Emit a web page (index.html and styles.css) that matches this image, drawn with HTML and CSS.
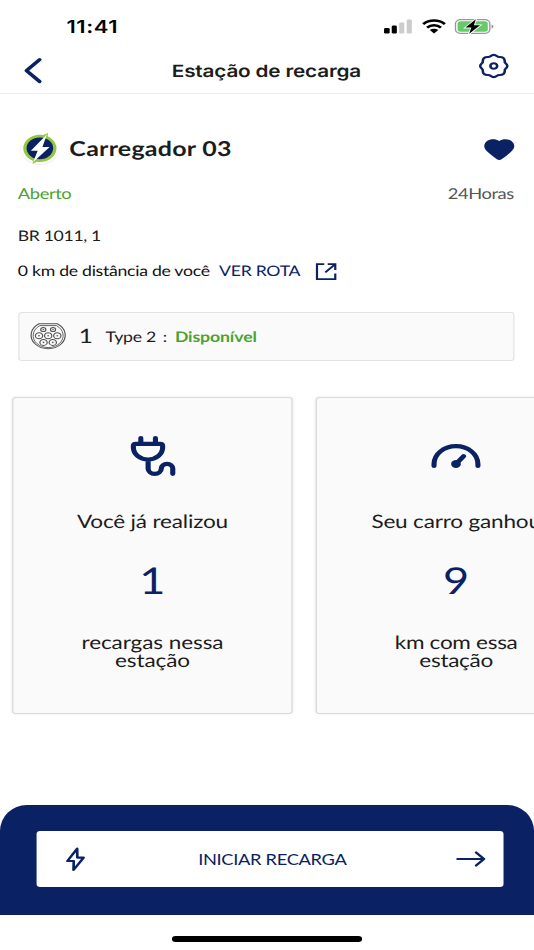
FILE: index.html
```html
<!DOCTYPE html>
<html lang="pt-BR">
<head>
<meta charset="utf-8">
<title>Estação de recarga</title>
<link rel="stylesheet" href="styles.css">
</head>
<body>
<div class="screen">
  <div class="status">
    <span class="time">11:41</span>
    <div class="indicators">
      <svg class="signal" width="23" height="15" viewBox="0 0 23 15"><rect x="0" y="9" width="4.6" height="5.5" rx="1.2"/><rect x="6.3" y="6.5" width="4.2" height="8" rx="1.2"/><g fill="#ccc"><rect x="12.4" y="3.5" width="4.2" height="11" rx="1.2"/><rect x="18.6" y="0.5" width="4.2" height="14" rx="1.2"/></g></svg>
      <svg class="wifi" width="20" height="15" viewBox="0 0 20 15"><g fill="none" stroke="#000" stroke-width="2.4"><path d="M1.1 5.2a12.6 12.6 0 0 1 17.8 0"/><path d="M4.3 8.6a8.1 8.1 0 0 1 11.4 0"/></g><path d="M6.5 11.1a5 5 0 0 1 7 0L10 14.6Z"/></svg>
      <svg class="battery" width="32" height="17" viewBox="0 0 32 17"><rect x=".6" y="1.6" width="28.2" height="13.8" rx="4" fill="#fff" stroke="#999" stroke-width="1.1"/><rect x="2.3" y="3.3" width="24.8" height="10.4" rx="2.5" fill="#65cb69"/><path d="M30.2 6.5q1.6.5 1.6 2t-1.6 2Z" fill="#999"/><path d="M17.3 1.2 8.8 9.6H13.6L11.8 15.8l9-8.6h-5.1Z" stroke="#fff" stroke-width="1.6" paint-order="stroke"/></svg>
    </div>
  </div>
  <header class="header">
    <svg class="back" width="15" height="26" viewBox="0 0 15 26"><path d="M12.5 2.700 1.700 13.700l10.800 10.800"/></svg>
    <h1 class="title">Estação de recarga</h1>
    <svg class="gear" width="24" height="24" viewBox="0 0 24 24"><path d="M9.300 2.300Q12-.5 14.700 2.300 15.600 3.200 16.900 3 20.900 3 21 7.100 20.800 8.400 21.700 9.300 24.500 12 21.700 14.700 20.800 15.600 21 16.900 21 21 16.900 21 15.600 20.800 14.700 21.700 12 24.500 9.300 21.700 8.400 20.800 7.100 21 3 21 3 16.900 3.200 15.600 2.300 14.700 -.5 12 2.300 9.300 3.200 8.400 3 7.100 3 3 7.100 3 8.400 3.200 9.300 2.300Z"/><circle cx="12" cy="12" r="2.800"/></svg>
  </header>
  <main>
    <section class="info">
      <div class="station">
        <svg class="logo" width="34" height="34" viewBox="0 0 34 34"><circle cx="16.700" cy="17" r="15.800" fill="#ededed"/><circle cx="16.700" cy="16.300" r="15.600" fill="#fff"/><circle cx="16.700" cy="16.300" r="13.600" fill="#93c83d"/><path d="M23.200 1V7L16 5ZM10.900 31.700V25L17 28Z" fill="#93c83d"/><circle cx="16.700" cy="16.300" r="10.900" fill="#0a2263"/><path d="M22.600 2.300 9.300 18.700h5.600L11.100 30.300l13.600-15.300h-5.900Z" fill="#fff"/></svg>
        <h2 class="name">Carregador 03</h2>
        <svg class="heart" width="25" height="21" viewBox="0 0 25 21"><path d="M12.500 2C9.600-.4 5.200-.3 2.500 2.100-.8 5.200-.3 9.200 2.200 12c2.300 2.700 5.100 5.400 8.100 8 1.300 1.200 3.100 1.200 4.400 0 3-2.600 5.800-5.300 8.100-8 2.500-2.800 3-6.800-.3-9.900C19.800-.3 15.400-.4 12.500 2Z"/></svg>
      </div>
      <div class="hours"><span class="open">Aberto</span><span class="time-range">24Horas</span></div>
      <p class="address">BR 1011, 1</p>
      <div class="route">
        <span class="distance">0 km de distância de você</span>
        <a class="link">VER ROTA</a>
        <svg width="17" height="18" viewBox="0 0 17 18"><path d="M7 1.200H1V16.200H16V10.500M9.800 1.200H16V7M15.500 1.700 7.800 9.300"/></svg>
      </div>
      <div class="connector">
        <svg width="29" height="27" viewBox="0 0 29 27"><g fill="none" stroke="#555" stroke-width="1"><path d="M7 .8H22a14 13.500 0 1 1-15 0Z"/><path stroke-width=".8" d="M7.700 2.600H21.300a12.300 12 0 1 1-13.600 0Z"/><circle cx="10.500" cy="6.500" r="2.100"/><circle cx="18.500" cy="6.500" r="2.100"/><circle cx="7" cy="12.700" r="3"/><circle cx="14.500" cy="12.700" r="3"/><circle cx="22" cy="12.700" r="3"/><circle cx="10.700" cy="19.400" r="3"/><circle cx="18.300" cy="19.400" r="3"/></g><g fill="#666"><circle cx="10.500" cy="6.500" r=".7"/><circle cx="18.500" cy="6.500" r=".7"/><circle cx="7" cy="12.700" r=".8"/><circle cx="14.500" cy="12.700" r=".8"/><circle cx="22" cy="12.700" r=".8"/><circle cx="10.700" cy="19.400" r=".8"/><circle cx="18.300" cy="19.400" r=".8"/></g></svg>
        <span class="count">1</span>
        <span class="type">Type 2</span>
        <span class="colon">:</span>
        <span class="available">Disponível</span>
      </div>
    </section>
    <section class="cards">
      <article class="card">
        <div class="card-icon"><svg width="37" height="40" viewBox="0 0 37 40"><path d="M8.500 2.200V7M20.500 2.200V7M4.500 7.800H24.300Q26.400 7.800 26.400 10V11.500A12 12 0 0 1 2.400 11.500V10Q2.400 7.800 4.500 7.800ZM14.500 23.500V32.500a5.400 5.400 0 0 0 10.800 0a4.700 4.700 0 0 1 9.400 0V37.800"/></svg></div>
        <p class="lead">Você já realizou</p>
        <p class="value">1</p>
        <p class="caption">recargas nessa<br>estação</p>
      </article>
      <article class="card">
        <div class="card-icon"><svg width="40" height="24" viewBox="0 0 40 24"><path d="M2 21.900V20.100a18 18 0 0 1 36 0v1.800M20 20l6.200-7.800"/><circle class="hub" cx="20" cy="20" r="4"/></svg></div>
        <p class="lead">Seu carro ganhou</p>
        <p class="value">9</p>
        <p class="caption tight">km com essa<br>estação</p>
      </article>
    </section>
  </main>
  <footer class="footer">
    <button class="start">
      <svg width="16" height="25" viewBox="0 0 16 25"><path d="M9.300 1.700 1.300 14H6.500L6.300 23 14.600 10.600H9.400Z"/></svg>
      <span>INICIAR RECARGA</span>
      <svg width="25" height="16" viewBox="0 0 25 16"><path d="M1.300 8H23M16.500 1.500 23 8l-6.500 6.500"/></svg>
    </button>
  </footer>
  <div class="home"><div class="home-bar"></div></div>
</div>
</body>
</html>
```
FILE: styles.css
```css
* { box-sizing: border-box; margin: 0; padding: 0; }
html, body { width: 534px; height: 950px; overflow: hidden; background: #fff; }
svg { display: block; flex: none; overflow: visible; }

.screen {
  width: 438px; height: 950px; overflow: hidden;
  display: flex; flex-direction: column;
  transform: scaleX(1.21918); transform-origin: 0 0;
  font-family: Lato, sans-serif; color: #1c1c1c; white-space: nowrap;
  text-rendering: geometricPrecision;
}

.status { height: 46px; padding: 7px 33px 0 54.500px; display: flex; align-items: center; justify-content: space-between; }
.time { font: 600 18px/20px Inter, sans-serif; color: #000; padding-top: 2px; letter-spacing: .5px; }
.indicators { display: flex; align-items: center; gap: 7.500px; }

.header { height: 48px; padding: 0 21px 0 20px; display: grid; grid-template-columns: 24px 1fr 24px; align-items: center; border-bottom: 1px solid #ececec; }
.title { font: 600 17px/22px Inter, sans-serif; text-align: center; padding-top: 4px; letter-spacing: -.15px; }
.back, .gear { fill: none; stroke: #0a2263; stroke-linecap: round; stroke-linejoin: round; }
.back { stroke-width: 3.200; }
.gear { stroke-width: 2.100; margin-top: -8px; }

.info { padding: 0 16.500px 0 14.600px; }
.station { height: 34px; margin-top: 38px; padding-left: 1.800px; display: flex; align-items: center; }
.name { margin-left: 6.500px; font-size: 20.500px; line-height: 26px; font-weight: 700; letter-spacing: .2px; }
.heart { margin-left: auto; fill: #0a2263; }
.hours { margin-top: 18px; display: flex; justify-content: space-between; font-size: 15px; line-height: 20px; letter-spacing: -.3px; }
.open { color: #4aa232; }
.time-range { color: #555; }
.address { margin-top: 23px; font-size: 14.500px; line-height: 20px; letter-spacing: -.3px; }
.route { margin-top: 15px; height: 20px; display: flex; align-items: center; font-size: 14.500px; line-height: 20px; color: #111; letter-spacing: -.24px; }
.link { margin: 0 12.500px 0 7.700px; color: #0a2263; }
.route svg { fill: none; stroke: #0a2263; stroke-width: 1.800; }

.connector { height: 49px; margin-top: 29.500px; padding-left: 9px; display: flex; align-items: center; background: #fafafa; border: 1px solid #e2e2e2; border-radius: 3px; font-size: 14.500px; letter-spacing: -.2px; }
.connector span { padding-top: 2px; }
.connector .count { margin-left: 11px; padding-top: 0; font-size: 20px; }
.type { margin-left: 10.500px; }
.colon { margin-left: 5.500px; }
.available { margin-left: 6.500px; font-weight: 700; color: #4aa232; letter-spacing: -.1px; }

.cards { margin-top: 36px; padding-left: 10.300px; display: flex; gap: 19.600px; }
.card { flex: none; width: 229.500px; height: 317px; padding-top: 28px; text-align: center; background: #fafafa; border: 1px solid #d9d9d9; border-radius: 3px; box-shadow: 0 0 3px rgba(0,0,0,.08); }
.card-icon { height: 60px; display: flex; align-items: center; justify-content: center; }
.card-icon svg { fill: none; stroke: #0a2263; stroke-width: 4.200; stroke-linecap: round; stroke-linejoin: round; }
.card-icon .hub { fill: #0a2263; stroke: none; }
.lead { margin-top: 23px; font-size: 18.500px; line-height: 24px; letter-spacing: -.15px; }
.value { margin-top: 24px; font-size: 37px; line-height: 45px; color: #0a2263; }
.caption { margin-top: 31px; font-size: 18.500px; line-height: 18.200px; letter-spacing: -.08px; }
.tight { letter-spacing: -.25px; }

.footer { height: 110px; margin-top: auto; flex: none; padding: 26px 25.400px 0 30.400px; background: #0a2263; border-radius: 22px 22px 0 0 / 26px 26px 0 0; }
.start { width: 100%; height: 56px; padding: 0 13.700px 0 24px; display: flex; align-items: center; justify-content: space-between; background: #fff; border: 0; border-radius: 3px; font: 15px Lato, sans-serif; letter-spacing: -.27px; color: #0a2263; }
.start span { padding-left: 2.500px; }
.start svg { fill: none; stroke: #0a2263; stroke-width: 2.200; stroke-linecap: round; stroke-linejoin: round; }
.home { height: 35px; flex: none; display: flex; justify-content: center; padding-top: 21px; }
.home-bar { width: 156.500px; height: 6px; border-radius: 3px; background: #000; }
```
